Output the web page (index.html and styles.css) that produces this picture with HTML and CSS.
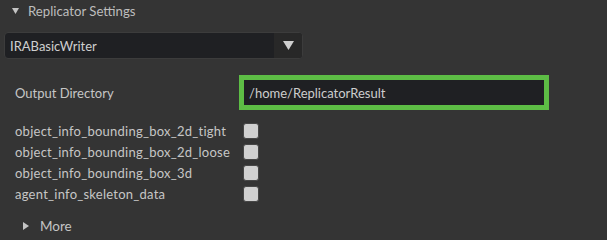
FILE: index.html
```html
<!DOCTYPE html>
<html>
<head>
<meta charset="utf-8">
<link rel="stylesheet" href="styles.css">
</head>
<body>
<div class="panel">
  <div class="header">
    <svg class="tri-down" width="7" height="6" viewBox="0 0 7 6"><polygon points="0,0 7,0 3.5,6" fill="#c4c4c4"/></svg>
    <span class="header-title">Replicator Settings</span>
  </div>
  <div class="combo">
    <div class="combo-value">IRABasicWriter</div>
    <div class="combo-btn">
      <svg width="11" height="9" viewBox="0 0 11 9"><polygon points="0,0 11,0 5.5,9" fill="#cfcfcf"/></svg>
    </div>
  </div>
  <div class="field-row">
    <div class="label field-label">Output Directory</div>
    <div class="path-box"><div class="path-input">/home/ReplicatorResult</div></div>
  </div>
  <div class="checks">
    <div class="check-row"><div class="label check-label">object_info_bounding_box_2d_tight</div><div class="checkbox"></div></div>
    <div class="check-row"><div class="label check-label">object_info_bounding_box_2d_loose</div><div class="checkbox"></div></div>
    <div class="check-row"><div class="label check-label">object_info_bounding_box_3d</div><div class="checkbox"></div></div>
    <div class="check-row"><div class="label check-label">agent_info_skeleton_data</div><div class="checkbox"></div></div>
  </div>
  <div class="more">
    <svg class="tri-right" width="6" height="8" viewBox="0 0 6 8"><polygon points="0,0 6,4 0,8" fill="#c4c4c4"/></svg>
    <span class="more-text">More</span>
  </div>
</div>
</body>
</html>
```

FILE: styles.css
```css
html, body {
  margin: 0;
  padding: 0;
  background: #343434;
}
body {
  width: 607px;
  height: 238px;
  overflow: hidden;
  font-family: Lato, "Liberation Sans", sans-serif;
  font-size: 13px;
  color: #c6c6c6;
}
.panel {
  padding-left: 4px;
}
.header {
  height: 22px;
  display: flex;
  align-items: center;
}
.tri-down {
  margin-left: 8px;
  margin-right: 9px;
}
.header-title {
  font-size: 13.2px;
  color: #bdbdbd;
}
.combo {
  margin-top: 10px;
  width: 297px;
  height: 25px;
  border: 1px solid #3c3c3c;
  border-radius: 4px;
  background: #1f2023;
  display: flex;
  overflow: hidden;
}
.combo-value {
  flex: 1;
  display: flex;
  align-items: center;
  padding-left: 5px;
  color: #cfcfcf;
  font-size: 13px;
}
.combo-btn {
  width: 28px;
  background: #282828;
  display: flex;
  align-items: center;
  justify-content: center;
}
.field-row {
  margin-top: 16px;
  height: 35px;
  display: flex;
  align-items: center;
  padding-left: 11px;
}
.field-label {
  width: 224px;
}
.path-box {
  width: 300px;
  height: 25px;
  border: 5px solid #5dbd45;
  background: #1f2023;
  display: flex;
  align-items: center;
}
.path-input {
  padding-left: 5px;
  color: #cdcdcd;
}
.checks {
  margin-top: 10px;
  padding-left: 11px;
}
.check-row {
  height: 21px;
  display: flex;
  align-items: center;
}
.check-label {
  width: 228px;
  letter-spacing: 0.25px;
}
.checkbox {
  width: 14px;
  height: 14px;
  background: #d0d0d0;
  border: 1px solid #464646;
  border-radius: 3px;
}
.more {
  margin-top: 13px;
  height: 18px;
  display: flex;
  align-items: center;
  padding-left: 19px;
}
.tri-right {
  margin-right: 11px;
}
.more-text {
  font-size: 13.5px;
  color: #c4c4c4;
}
```
